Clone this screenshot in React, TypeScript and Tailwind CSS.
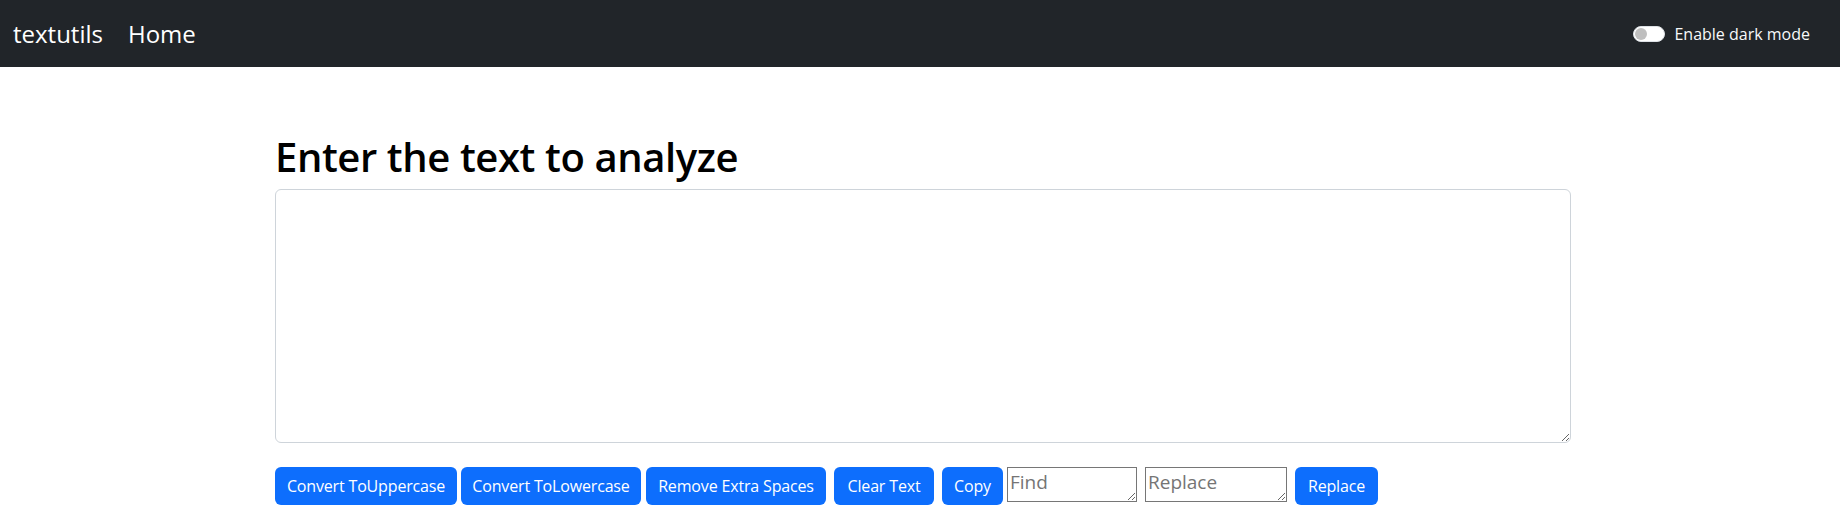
import React from 'react';

const buttons = [
  { label: 'Convert ToUppercase', cls: 'w-[182px]' },
  { label: 'Convert ToLowercase', cls: 'ml-1 w-[180px]' },
  { label: 'Remove Extra Spaces', cls: 'ml-[5px] w-[180px]' },
  { label: 'Clear Text', cls: 'ml-2 w-[100px]' },
  { label: 'Copy', cls: 'ml-2 w-[61px]' },
];

const Btn: React.FC<{ label: string; className?: string }> = ({ label, className = '' }) => (
  <button
    className={`h-[38px] rounded-[6px] bg-[#0d6efd] text-white text-[16px] tracking-[-0.01em] whitespace-nowrap text-center ${className}`}
  >
    {label}
  </button>
);

export default function App() {
  const [dark, setDark] = React.useState(false);
  const [text, setText] = React.useState('');

  return (
    <div className="min-h-[526px] bg-white font-['Open_Sans',sans-serif] text-[#212529]">
      {/* Navbar */}
      <nav className="h-[67px] bg-[#212529] flex items-center px-3">
        <span className="text-[24px] text-white pl-[1px]">textutils</span>
        <a className="text-[24px] text-white ml-[25px]">Home</a>
        <label className="ml-auto mr-[18px] flex items-center gap-[9px] text-[16px] text-[#f8f9fa] cursor-pointer">
          <span
            onClick={() => setDark(!dark)}
            className="w-8 h-4 rounded-full bg-white border border-[#dee2e6] flex items-center px-[1px]"
          >
            <span className="w-3 h-3 rounded-full bg-[#bfbfbf]" />
          </span>
          Enable dark mode
        </label>
      </nav>

      {/* alert slot */}
      <div className="h-[50px]" />

      <div className="ml-[263px] w-[1320px] px-3 pt-4">
        <h1 className="text-[40px] leading-[48px] font-semibold tracking-[-0.01em] text-black mb-2">
          Enter the text to analyze
        </h1>
        <textarea
          value={text}
          onChange={(e) => setText(e.target.value)}
          className="block w-full h-[254px] border border-[#ced4da] rounded-[6px] px-3 py-[6px] text-[16px] outline-none"
        />
        <div className="flex items-start mt-6">
          {buttons.map((b) => (
            <Btn key={b.label} label={b.label} className={b.cls} />
          ))}
          <textarea
            placeholder="Find"
            className="ml-1 w-[130px] h-[35px] border border-[#767676] px-[2px] py-[1px] text-[19px] leading-[26px] placeholder:text-[#757575] outline-none"
          />
          <textarea
            placeholder="Replace"
            className="ml-2 w-[142px] h-[35px] border border-[#767676] px-[2px] py-[1px] text-[19px] leading-[26px] placeholder:text-[#757575] outline-none"
          />
          <Btn label="Replace" className="ml-2 w-[83px]" />
        </div>
      </div>
    </div>
  );
}
